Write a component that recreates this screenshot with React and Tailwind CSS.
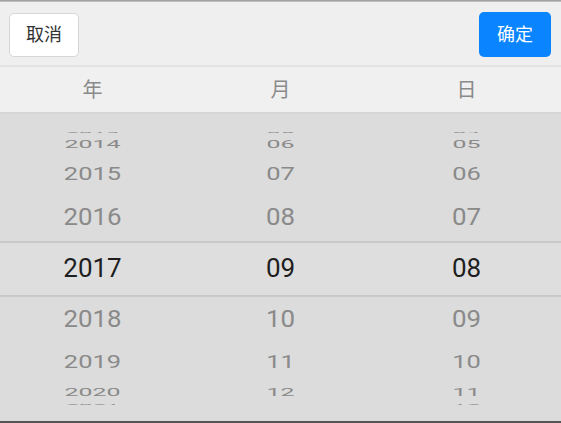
import React from "react";

const R = 136;
const STEP = 22;

function Wheel({ values, selected }) {
  const idx = values.indexOf(selected);
  const items = [];
  for (let k = -4; k <= 4; k++) {
    const v = values[idx + k];
    if (v === undefined) continue;
    const a = (k * STEP * Math.PI) / 180;
    const dy = R * Math.sin(a);
    const sy = Math.max(Math.cos(a), 0.06);
    const sx = 0.93 + 0.07 * Math.cos(a);
    items.push(
      <div
        key={v}
        className={
          "absolute left-0 right-0 h-[30px] leading-[30px] text-center text-[26px] " +
          (k === 0 ? "text-[#1e1e1e]" : "text-[#8a8a8a]")
        }
        style={{
          top: 154 + dy - 15,
          transform: `scale(${sx}, ${sy})`,
        }}
      >
        {v}
      </div>
    );
  }
  return <div className="relative h-full">{items}</div>;
}

const years = Array.from({ length: 12 }, (_, i) => String(2010 + i));
const months = Array.from({ length: 12 }, (_, i) => String(i + 1).padStart(2, "0"));
const days = Array.from({ length: 31 }, (_, i) => String(i + 1).padStart(2, "0"));

export default function App() {
  return (
    <div
      className="w-[561px] h-[423px] flex flex-col overflow-hidden bg-[#dcdcdc]"
      style={{ fontFamily: 'Roboto, "Noto Sans CJK SC", sans-serif' }}
    >
      <div className="h-[2px] bg-gradient-to-b from-[#939393] to-[#cdcdcd]" />
      <div className="h-[63px] flex items-center justify-between pl-[9px] pr-[10px] bg-[#efefef]">
        <button className="w-[70px] h-[44px] mt-[2px] rounded-[5px] bg-white border border-[#d6d6d6] text-[18px] text-[#333]">
          取消
        </button>
        <button className="w-[72px] h-[45px] mt-[2px] rounded-[5px] bg-[#0a84ff] text-[18px] text-white">
          确定
        </button>
      </div>
      <div className="h-[2px] bg-[#e2e2e2]" />
      <div className="h-[45px] grid grid-cols-3 items-center bg-[#f0f0f0] text-[20px] text-[#8a8a8a] text-center">
        <div className="pr-[2px]">年</div>
        <div>月</div>
        <div className="pr-[2px]">日</div>
      </div>
      <div className="h-[2px] bg-[#d6d6d6]" />
      <div className="relative flex-1 grid grid-cols-3">
        <div className="absolute left-0 right-0 top-[127px] h-[56px] border-y-2 border-[#c9c9c9] bg-[#dedede]" />
        <div className="pr-[2px]">
          <Wheel values={years} selected="2017" />
        </div>
        <Wheel values={months} selected="09" />
        <div className="pr-[2px]">
          <Wheel values={days} selected="08" />
        </div>
      </div>
      <div className="h-[2px] bg-[#555]" />
    </div>
  );
}
